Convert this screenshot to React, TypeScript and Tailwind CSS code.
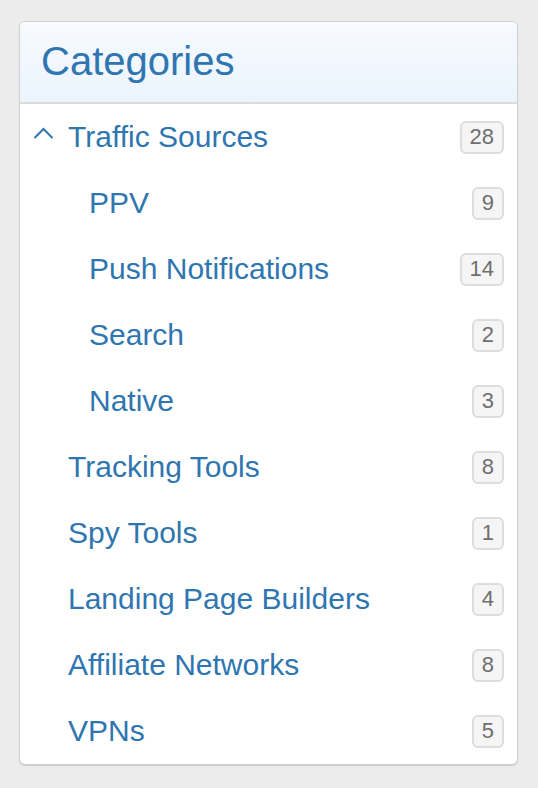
import React from 'react';

type Item = { label: string; count: number; level: 0 | 1; open?: boolean };

const items: Item[] = [
  { label: 'Traffic Sources', count: 28, level: 0, open: true },
  { label: 'PPV', count: 9, level: 1 },
  { label: 'Push Notifications', count: 14, level: 1 },
  { label: 'Search', count: 2, level: 1 },
  { label: 'Native', count: 3, level: 1 },
  { label: 'Tracking Tools', count: 8, level: 0 },
  { label: 'Spy Tools', count: 1, level: 0 },
  { label: 'Landing Page Builders', count: 4, level: 0 },
  { label: 'Affiliate Networks', count: 8, level: 0 },
  { label: 'VPNs', count: 5, level: 0 },
];

const App = () => {
  return (
    <div className="min-h-screen bg-[#ececec] pt-[21px] pl-[19px] font-['Liberation_Sans',Arial,sans-serif]">
      <div className="w-[499px] rounded-[6px] border border-[#d0d0d0] bg-white shadow-[0_1px_1px_rgba(0,0,0,0.14)] overflow-hidden">
        {/* Header */}
        <div className="h-[82px] flex items-center pl-[21px] bg-gradient-to-b from-[#f7faff] to-[#ebf4fd] border-b-2 border-[#dcdcdc]">
          <h2 className="text-[40px] leading-none text-[#2f76b0] pb-[2px]">Categories</h2>
        </div>

        {/* List */}
        <ul>
          {items.map((item) => (
            <li key={item.label} className="h-[66px] flex items-center pr-[13px]">
              <div className="w-[48px] flex justify-start pl-[13px] shrink-0">
                {item.open && (
                  <svg width="21" height="13" viewBox="0 0 21 13" fill="none" className="mb-[7px]">
                    <path d="M1.5 11 L10.5 2 L19.5 11" stroke="#2f76b0" strokeWidth="2" />
                  </svg>
                )}
              </div>
              <span
                className={`flex-1 text-[30px] leading-none text-[#2f76b0] ${item.level === 1 ? 'pl-[21px]' : ''}`}
              >
                {item.label}
              </span>
              <span className="h-[33px] min-w-[31px] px-[8px] flex items-center justify-center rounded-[6px] border-2 border-[#dddddd] bg-[#f5f5f5] text-[22px] leading-none text-[#6f6f6f]">
                {item.count}
              </span>
            </li>
          ))}
        </ul>
      </div>
    </div>
  );
};

export default App;
